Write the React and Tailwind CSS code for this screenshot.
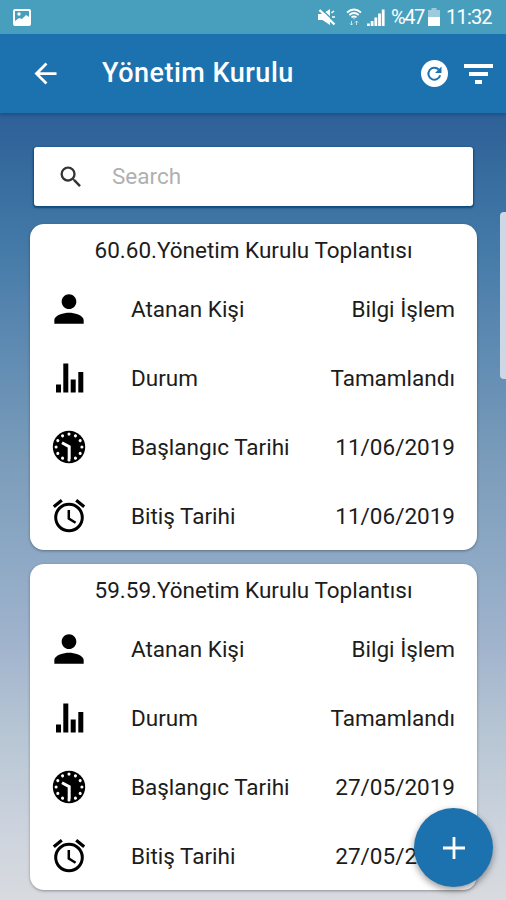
import { MdArrowBack, MdPerson, MdSearch } from 'react-icons/md';

const meetings = [
    { no: '60.60', person: 'Bilgi İşlem', status: 'Tamamlandı', start: '11/06/2019', end: '11/06/2019' },
    { no: '59.59', person: 'Bilgi İşlem', status: 'Tamamlandı', start: '27/05/2019', end: '27/05/2019' },
];

const ticks = [0, 30, 60, 90, 120, 150, 180, 210, 240, 270, 300, 330];

const ChartIcon = () => (
    <svg viewBox="0 0 36 36" className="w-9 h-9 text-black" fill="currentColor">
        <path d="M5 24.500h5v8H5zM12.300 3.500h5v29h-5zM19.700 19.500h5v13h-5zM27.300 12h5v20.500h-5z" />
    </svg>
);

const ClockIcon = () => (
    <svg viewBox="0 0 36 36" className="w-9 h-9">
        <circle cx="18" cy="18" r="16.200" fill="black" />
        {ticks.map((angle) => (
            <circle key={angle} cx="18" cy="5.100" r="1.550" fill="white" transform={`rotate(${angle} 18 18)`} />
        ))}
        <path d="M11 13.700l7.200 4V30" fill="none" stroke="white" strokeWidth="3" />
    </svg>
);

const AlarmIcon = () => (
    <svg viewBox="0 0 36 36" className="w-9 h-9 text-black" fill="none" stroke="currentColor">
        <circle cx="18" cy="19.500" r="13.300" strokeWidth="3" />
        <path d="M2.800 8.700l8-6.500M33.200 8.700l-8-6.500" strokeWidth="3.200" />
        <path d="M17.800 12v8.500l6.800 4.300" strokeWidth="2.500" />
    </svg>
);

const StatusBar = () => (
    <div className="h-[34px] bg-[#489fbd] flex items-center pl-[13px] pr-[14px] text-white">
        <svg viewBox="0 0 18 17" className="w-[18px] h-[17px]">
            <path fillRule="evenodd" fill="white" d="M2 0h14a2 2 0 0 1 2 2v13a2 2 0 0 1-2 2H2a2 2 0 0 1-2-2V2a2 2 0 0 1 2-2zM2 2v10l4-3 3 1 4-4 3 2V2z" />
            <circle cx="6" cy="5" r="1.700" fill="white" />
        </svg>
        <div className="ml-auto flex items-center">
            {/* Mute */}
            <svg viewBox="0 0 18 18" className="w-[18px] h-[18px] mr-[10px]">
                <path d="M0 6h4.500L12 1v16l-7.500-5H0z" fill="white" />
                <path d="M3 1L18 14.500" stroke="#489fbd" strokeWidth="1.500" />
                <path d="M1.500 2L16.500 16.500" stroke="white" strokeWidth="2.400" />
                <path d="M13.500 5l2.500-2M14 9h3" stroke="white" strokeWidth="1.500" />
            </svg>
            {/* Wifi */}
            <svg viewBox="0 0 16 18" className="w-4 h-[18px] mr-[5px]" fill="none" stroke="white" strokeWidth="1.700">
                <path d="M1 4.500q7-6 14 0M3.300 7q4.700-4 9.400 0M5.500 9.300q2.500-2 5 0" />
                <path d="M8 9v2.500M5.500 13v4M4 15.500L5.500 17 7 15.500M10.500 17v-4M9 14.500l1.500-1.500 1.500 1.500" strokeWidth="1" strokeOpacity="0.7" />
            </svg>
            {/* Signal */}
            <svg viewBox="0 0 18 18" className="w-[18px] h-[18px] mr-[6px]" fill="white">
                <path d="M0 15.500h2.800V18H0zM3.700 13h2.800v5H3.700zM7.400 9.500h2.800V18H7.400zM11.100 5.500h2.800V18h-2.800zM14.800 1.500h2.800V18h-2.800z" />
            </svg>
            <span className="w-[33px] whitespace-nowrap text-[20px] leading-none tracking-[-1.4px]">%47</span>
            {/* Battery */}
            <svg viewBox="0 0 12 18" className="w-3 h-[18px] ml-[4px] mr-[6px]">
                <path d="M3.500 0h5v2H12v7H0V2h3.500z" fill="#9bcbdc" />
                <path d="M0 9h12v9H0z" fill="white" />
            </svg>
            <span className="w-[46px] whitespace-nowrap text-[20px] leading-none tracking-[-0.8px]">11:32</span>
        </div>
    </div>
);

const Header = () => (
    <header className="relative h-[79px] bg-[#1c72ae] flex items-center pl-[29px] pr-[13px] text-white shadow-[0_2px_3px_rgba(0,40,90,0.3)]">
        <MdArrowBack size={33} />
        <h1 className="ml-10 text-[27px] leading-none font-medium tracking-[0.5px]">Yönetim Kurulu</h1>
        <button className="ml-auto w-[27px] h-[27px] rounded-full bg-white">
            <svg viewBox="0 0 27 27" className="w-full h-full" fill="none">
                <path d="M17.700 9.500A6 6 0 1 0 19.200 15.300" stroke="#1c72ae" strokeWidth="2" />
                <path d="M20.500 6.500v6.500H14z" fill="#1c72ae" />
            </svg>
        </button>
        <button className="ml-4 w-[29px] h-5 flex flex-col items-center justify-between">
            <span className="w-[29px] h-1 bg-white"></span>
            <span className="w-[19px] h-1 bg-white"></span>
            <span className="w-[7px] h-1 bg-white"></span>
        </button>
    </header>
);

const Row = ({ icon, label, value }) => (
    <div className="h-[69px] flex items-center pl-[21px] pr-[22px]">
        <span className="w-9 flex justify-center">{icon}</span>
        <span className="ml-[44px] pt-[2px]">{label}</span>
        <span className="ml-auto pt-[2px]">{value}</span>
    </div>
);

const MeetingCard = ({ meeting }) => (
    <div className="h-[326px] bg-white rounded-[14px] shadow-[0_1px_3px_rgba(0,0,0,0.35)] text-[22.5px] leading-none text-[#1c1c1c] whitespace-nowrap">
        <h2 className="h-[50px] pt-[2px] flex items-center justify-center">{meeting.no}.Yönetim Kurulu Toplantısı</h2>
        <Row icon={<MdPerson size={44} className="shrink-0 text-black" />} label="Atanan Kişi" value={meeting.person} />
        <Row icon={<ChartIcon />} label="Durum" value={meeting.status} />
        <Row icon={<ClockIcon />} label="Başlangıc Tarihi" value={meeting.start} />
        <Row icon={<AlarmIcon />} label="Bitiş Tarihi" value={meeting.end} />
    </div>
);

const App = () => {
    return (
        <div className="relative w-full h-[900px] overflow-hidden flex flex-col font-['Roboto',sans-serif]">
            <StatusBar />
            <Header />
            <main className="flex-1 bg-[linear-gradient(to_bottom,#2d6097_0%,#4077a6_15%,#5b88b1_28%,#7a9cba_44%,#8ea9c5_57%,#a0b3cd_67%,#b7c6d4_79%,#ced4de_92%,#d8dade_100%)] pt-[34px]">
                {/* Search */}
                <div className="ml-[34px] w-[439px] h-[59px] bg-white rounded-[3px] flex items-center pl-[23px] shadow-[0_1px_2px_1px_rgba(0,65,115,0.8)]">
                    <MdSearch size={28} className="text-[#333]" />
                    <span className="ml-[27px] text-[22.5px] leading-none text-[#b0b0b0]">Search</span>
                </div>
                <div className="mt-[18px] ml-[30px] w-[447px] flex flex-col gap-[14px]">
                    {meetings.map((meeting) => (
                        <MeetingCard key={meeting.no} meeting={meeting} />
                    ))}
                </div>
            </main>
            {/* Scroll thumb */}
            <div className="absolute right-0 top-[212px] w-[6px] h-[167px] rounded-l-[4px] bg-[#ccd8e5]"></div>
            <button className="absolute left-[414px] top-[808px] w-[79px] h-[79px] rounded-full bg-[#1c72ae] flex items-center justify-center shadow-[0_3px_7px_rgba(0,0,0,0.4)]">
                <svg viewBox="0 0 22 22" className="w-[22px] h-[22px]" stroke="white" strokeWidth="2.800">
                    <path d="M11 0v22M0 11h22" />
                </svg>
            </button>
        </div>
    );
}

export default App;
